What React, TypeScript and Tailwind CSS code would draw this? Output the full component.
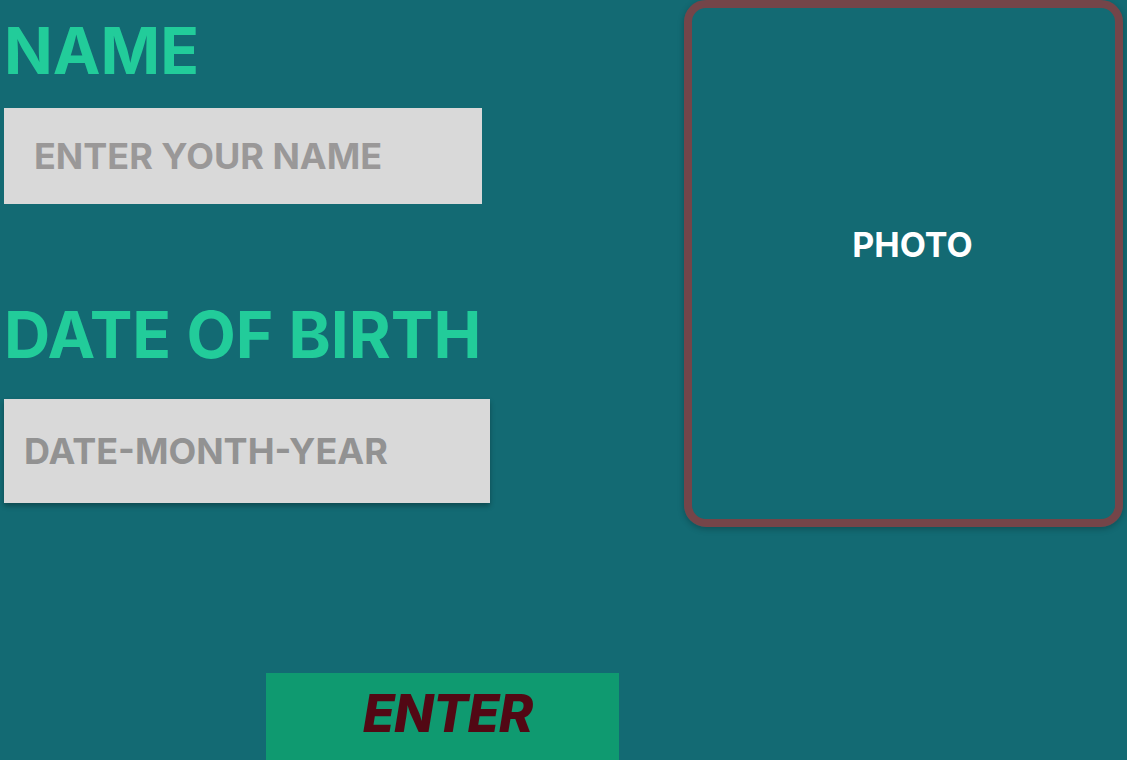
export default function App() {
  return (
    <div
      className="flex h-[760px] w-full overflow-hidden bg-[#136a73]"
      style={{ fontFamily: "Inter, 'Noto Sans', sans-serif" }}
    >
      {/* left column: form */}
      <div className="flex shrink-0 flex-col pl-[4px]">
        <h1 className="mt-[19px] shrink-0 text-[64px] font-bold leading-none text-[#22cc9a]">NAME</h1>
        <div className="mt-[25px] flex h-[96px] w-[478px] shrink-0 items-center bg-[#d9d9d9] pl-[30px]">
          <span className="text-[36px] font-bold leading-none text-[#9a9898]">ENTER YOUR NAME</span>
        </div>

        <h1 className="mt-[99px] shrink-0 text-[64px] font-bold leading-none text-[#22cc9a]">DATE OF BIRTH</h1>
        <div className="mt-[32px] flex h-[104px] w-[486px] shrink-0 items-center bg-[#d9d9d9] pl-[20px] shadow-[0_3px_5px_rgba(0,0,0,0.3)]">
          <span className="text-[36px] font-bold leading-none text-[#929292]">DATE-MONTH-YEAR</span>
        </div>

        <button className="mt-[170px] ml-[262px] flex h-[100px] w-[353px] shrink-0 justify-center bg-[#0f9a70] pl-[10px] pt-[15px]">
          <span className="text-[52px] font-extrabold italic leading-none tracking-[-0.8px] text-[#520814]">ENTER</span>
        </button>
      </div>

      {/* right column: photo frame */}
      <div className="ml-auto mr-[4px]">
        <div className="flex h-[527px] w-[439px] items-center justify-center rounded-[22px] border-[8px] border-[#744549] pb-[38px] pl-[18px] shadow-[0_2px_6px_rgba(0,0,0,0.25)]">
          <span className="text-[34px] font-bold leading-none text-white">PHOTO</span>
        </div>
      </div>
    </div>
  );
}
